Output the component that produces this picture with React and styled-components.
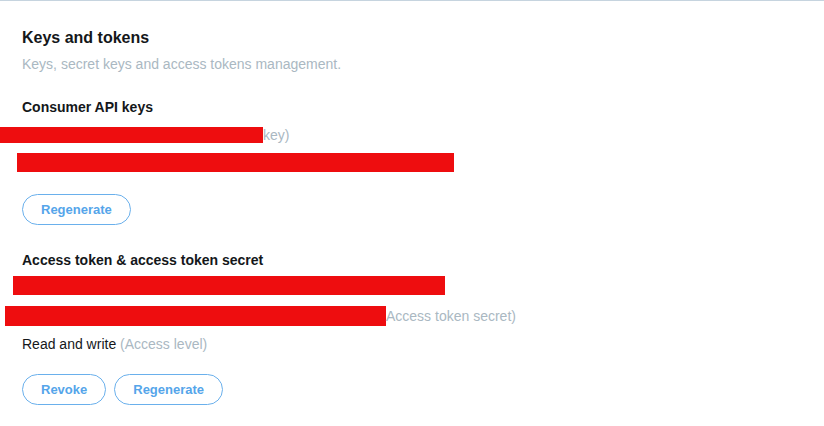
import styled, { createGlobalStyle } from "styled-components";

const GlobalStyle = createGlobalStyle`
  html, body {
    margin: 0;
    padding: 0;
    background: #ffffff;
  }
  body {
    font-family: "Liberation Sans", Arial, sans-serif;
    color: #14171a;
  }
`;

const Page = styled.div`
  width: 824px;
  height: 426px;
  box-sizing: border-box;
  border-top: 1px solid #c6d4df;
  padding: 27px 0 0 22px;
  overflow: hidden;
`;

const Title = styled.h1`
  margin: 0;
  font-size: 16px;
  line-height: 20px;
  font-weight: 700;
  color: #14171a;
`;

const Subtitle = styled.p`
  margin: 6px 0 0;
  font-size: 14px;
  line-height: 20px;
  color: #aab8c2;
`;

const SectionTitle = styled.h2`
  margin: ${(props) => props.top}px 0 0;
  font-size: 14px;
  line-height: 20px;
  font-weight: 700;
  color: #14171a;
`;

const KeyLine = styled.div`
  display: flex;
  align-items: center;
  height: 20px;
  margin-top: ${(props) => props.top}px;
  font-size: 14px;
  color: #aab8c2;
`;

const Redaction = styled.span`
  display: block;
  flex: none;
  height: ${(props) => props.h || 18}px;
  width: ${(props) => props.w}px;
  margin-left: ${(props) => props.left - 22}px;
  background: #ee0d0f;
`;

const Hint = styled.span`
  color: #aab8c2;
`;

const Line = styled.div`
  margin-top: 8px;
  font-size: 14px;
  line-height: 20px;
  color: #14171a;
`;

const Actions = styled.div`
  display: flex;
  gap: 8px;
  margin-top: ${(props) => props.top}px;
`;

const Button = styled.button`
  height: 31px;
  padding: 0 18px;
  border: 1px solid #6ab0ec;
  border-radius: 16px;
  background: #ffffff;
  color: #55a5ea;
  font-family: "Liberation Sans", Arial, sans-serif;
  font-size: 13px;
  font-weight: 700;
  cursor: pointer;
`;

export default function App() {
  return (
    <>
      <GlobalStyle />
      <Page>
        <Title>Keys and tokens</Title>
        <Subtitle>Keys, secret keys and access tokens management.</Subtitle>

        <SectionTitle top={23}>Consumer API keys</SectionTitle>
        <KeyLine top={8}>
          <Redaction left={0} w={263} h={16} />
          <Hint>key)</Hint>
        </KeyLine>
        <KeyLine top={7}>
          <Redaction left={17} w={437} h={19} />
        </KeyLine>
        <Actions top={22}>
          <Button>Regenerate</Button>
        </Actions>

        <SectionTitle top={25}>Access token &amp; access token secret</SectionTitle>
        <KeyLine top={5}>
          <Redaction left={13} w={432} h={19} />
        </KeyLine>
        <KeyLine top={11}>
          <Redaction left={5} w={381} h={20} />
          <Hint>Access token secret)</Hint>
        </KeyLine>
        <Line>
          Read and write <Hint>(Access level)</Hint>
        </Line>
        <Actions top={20}>
          <Button>Revoke</Button>
          <Button>Regenerate</Button>
        </Actions>
      </Page>
    </>
  );
}
